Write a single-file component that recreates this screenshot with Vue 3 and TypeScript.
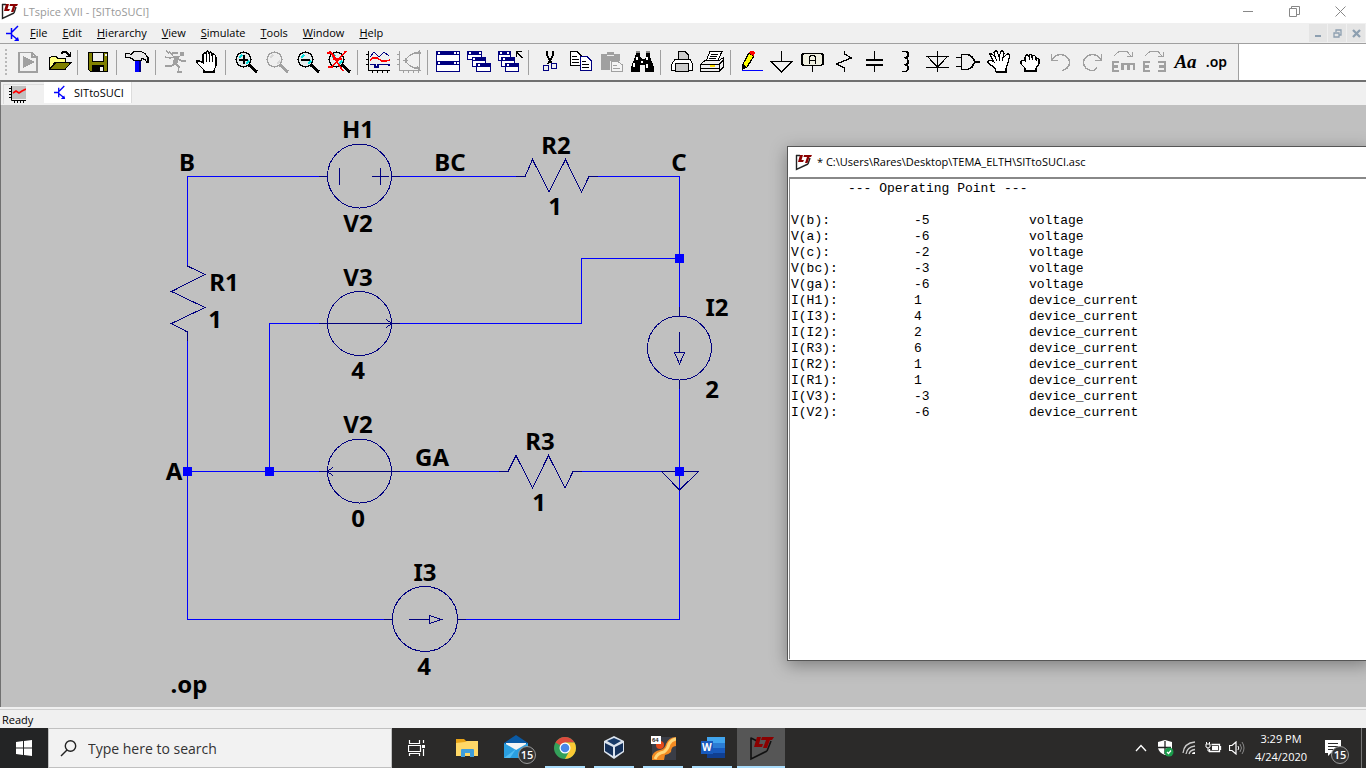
<script setup lang="ts">
interface Tool {
  name: string
  art?: string
  text?: string
  kind?: string
  off?: boolean
}

const G = '#a0a0a0'

const lens = (ring: string, glass: string, shine: string, mark: string) =>
  `<path d="M15 15L23 22" stroke="${ring}" stroke-width="3"/>
   <circle cx="9.500" cy="9.500" r="7.300" fill="${glass}" stroke="${ring}" stroke-width="1.500"/>
   <path d="M5 8L8 5M12 14L15 11" stroke="${shine}" stroke-width="2"/>${mark}`

const handPath =
  'M9 22V20L6 17L2 13V11H5L8 13V4L9 3H10L11 4V2L12 1H13L14 2V3L15 2H16L17 3V5L18 4H19L20 5L21 7V16L19 20V22Z'

const groups: Tool[][] = [
  [
    {
      name: 'Run simulation',
      off: true,
      art: `<path d="M3 2.500H16L21 7V22H3ZM16 3V7H21" fill="none" stroke="${G}" stroke-width="1.500"/><path d="M7 6L19 12L7 18Z" fill="${G}"/>`,
    },
    {
      name: 'Open',
      art: `<path d="M2.500 19V8L4.500 6.500H9L11 8.500H18V12.500H8L2.500 19Z" fill="#ffff80" stroke="#000"/><path d="M3 19.500L9 12.500H24L18 19.500Z" fill="#808000" stroke="#000"/><path d="M14 4L16 2H19L23 6M23.500 2V6.500H19" fill="none" stroke="#000" stroke-width="1.500"/>`,
    },
  ],
  [
    {
      name: 'Save',
      art: `<path d="M2.500 2.500H21.500V21.500H4.500L2.500 19.500Z" fill="#808000" stroke="#000"/><rect x="6.500" y="2.500" width="11" height="9" fill="#efefef" stroke="#000"/><rect x="6" y="15" width="12" height="6" fill="#000"/><rect x="14" y="17" width="3" height="4" fill="#efefef"/><rect x="19" y="4" width="2" height="2" fill="#efefef"/>`,
    },
  ],
  [
    {
      name: 'Control panel',
      art: `<path d="M10 11H16V22H10Z" fill="#00f"/><path d="M14 11H16V22H14Z" fill="#000080"/><path d="M.500 3.500H4L6 4.500L9 1.500H16L20 3.500L23 7.500V12.500H22L20 9.500L17 8.500L16 10.500H9L7 8.500L4 7.500H.500Z" fill="#e8e8e8" stroke="#000" stroke-width="1.200"/>`,
    },
  ],
  [
    {
      name: 'Run',
      off: true,
      art: `<circle cx="18" cy="4" r="2.500" fill="${G}"/><path d="M1 7L6 8L10 7L14 9L18 11H22M13 8L11 14L7 16L1 16M12 14L15 17L14 22L18 22M5 2L9 5M2 1L5 3M8 3H14" fill="none" stroke="${G}" stroke-width="1.500"/><path d="M10 6L16 6L13 14L9 14Z" fill="${G}"/>`,
    },
    {
      name: 'Halt',
      art: `<path d="${handPath}" fill="#fff" stroke="#000" stroke-width="1.300"/><path d="M11.500 4V12M14.500 3V12M17.500 5V12" stroke="#000"/>`,
    },
  ],
  [
    { name: 'Zoom area', art: lens('#000', '#e4ecec', '#00e0e0', '<path d="M5 9.500H14M9.500 5V14" stroke="#000" stroke-width="2"/>') },
    { name: 'Pan', off: true, art: lens(G, '#efefef', '#d8d8d8', '') },
    { name: 'Zoom back', art: lens('#000', '#e4ecec', '#00e0e0', '<path d="M5 9.500H14" stroke="#000" stroke-width="2"/>') },
    {
      name: 'Zoom full extents',
      art: lens('#000', '#e4ecec', '#00e0e0', '<path d="M0 3H4L16 21M1 17H5L19 1M6 9L15 9M3 1L10 10" fill="none" stroke="#f00" stroke-width="1.600"/>'),
    },
  ],
  [
    {
      name: 'Autorange',
      art: `<path d="M2.500 1V20.500H24M0 4.500H2M0 9.500H2M0 14.500H2M6.500 20V23M11.500 20V23M16.500 20V23M21.500 20V23" fill="none" stroke="#000"/><path d="M4 7L8 2L13 7L18 2L23 6" fill="none" stroke="#000080"/><path d="M4 10L7 8L11 8L16 11H20L24 10" fill="none" stroke="#f00" stroke-width="1.500"/><path d="M4 14.500H9V17H12V14.500H23V16" fill="none" stroke="#000080" stroke-width="1.500"/>`,
    },
    {
      name: 'FFT',
      off: true,
      art: `<path d="M2.500 1V20.500H24M0 4.500H2M0 9.500H2M0 14.500H2M6.500 20V23M11.500 20V23M16.500 20V23M21.500 20V23M22.500 1V20M20 4L22.500 1L24 4M20 16L22.500 20M22 3H17L12 6L9 9V12L12 15L17 18H22M6 10.500H11M9 8V13" fill="none" stroke="${G}" stroke-width="1.200"/>`,
    },
  ],
  [
    {
      name: 'Tile windows',
      art: `<path d="M.500 1.500H23.500V21.500H.500Z" fill="#fff" stroke="#000080"/><path d="M0 1H24V5H0ZM0 11H24V15H0Z" fill="#000080"/><path d="M2 2H4V4H2ZM18 2H20V4H18ZM21 2H23V4H21ZM2 12H4V14H2ZM18 12H20V14H18ZM21 12H23V14H21Z" fill="#fff"/>`,
    },
    {
      name: 'Cascade windows',
      art: `<g fill="#fff" stroke="#000080"><path d="M.500 1.500H14.500V9.500H.500Z"/><path d="M5.500 7.500H18.500V16.500H5.500Z"/><path d="M9.500 13.500H23.500V21.500H9.500Z"/></g><path d="M0 1H15V5H0ZM5 7H19V11H5ZM9 13H24V17H9Z" fill="#000080"/><path d="M2 2H4V4H2ZM12 2H14V4H12ZM6 8H8V10H6ZM11 14H13V16H11Z" fill="#fff"/>`,
    },
    {
      name: 'Close all',
      art: `<g fill="#fff" stroke="#000080"><path d="M.500 1.500H12.500V10.500H.500Z"/><path d="M3.500 7.500H16.500V16.500H3.500Z"/><path d="M7.500 13.500H20.500V21.500H7.500Z"/></g><path d="M0 1H13V5H0ZM3 7H17V11H3ZM7 13H21V17H7Z" fill="#000080"/><path d="M2 2H4V4H2ZM9 2H11V4H9ZM5 8H7V10H5ZM9 14H11V16H9Z" fill="#fff"/><path d="M18.500 7V1.500H24M19 2L24 8" fill="none" stroke="#000" stroke-width="1.500"/>`,
    },
  ],
  [
    {
      name: 'Cut',
      art: `<path d="M10 1V5L15 14M16 1V5L11 14" fill="none" stroke="#000" stroke-width="1.800"/><circle cx="9" cy="18" r="2.800" fill="none" stroke="#000080" stroke-width="1.500"/><circle cx="17" cy="16" r="2.800" fill="none" stroke="#000080" stroke-width="1.500"/>`,
    },
    {
      name: 'Copy',
      art: `<path d="M2.500 1.500H9L13.500 6V15.500H2.500Z" fill="#fff" stroke="#000"/><path d="M4 6.500H9M4 9.500H11M4 12.500H11" stroke="#000"/><path d="M12.500 6.500H19L23.500 11V20.500H12.500Z" fill="#fff" stroke="#000080" stroke-width="1.300"/><path d="M14 11.500H18M14 14.500H21M14 17.500H21" stroke="#000"/>`,
    },
    {
      name: 'Paste',
      off: true,
      art: `<path d="M2 4H8V2H15V4H21V11H11V20H2Z" fill="${G}"/><path d="M8 5.500H15" stroke="#eee"/><path d="M12.500 11.500H19L23.500 15V21.500H12.500Z" fill="#f4f4f4" stroke="${G}"/><path d="M14 15.500H18M14 18.500H21" stroke="${G}"/>`,
    },
    {
      name: 'Find',
      art: `<path d="M6 3H10V7L12 9H14L16 7V3H20V7L24 17V22H15V15H10V22H1V17L5 7Z" fill="#000"/><path d="M6 1H10V3H6ZM16 1H20V3H16Z" fill="#888"/><path d="M7 7V10M4 13V17M17 7V10M17 14V18M12 11V13" stroke="#fff" stroke-width="1.500"/>`,
    },
  ],
  [
    {
      name: 'Print',
      art: `<path d="M9.500 9.500V1.500H16L19.500 5V9.500" fill="#ccc" stroke="#000"/><path d="M2.500 14.500L6 9.500H21L23.500 13.500V20.500H2.500Z" fill="#fff" stroke="#000"/><path d="M6.500 13.500H19.500V21.500H6.500Z" fill="#ccc" stroke="#000"/>`,
    },
    {
      name: 'Print setup',
      art: `<path d="M6.500 10L10 1.500H22L18 10Z" fill="#fff" stroke="#000"/><path d="M11 4.500H18M10 6.500H17M9 8.500H16" stroke="#000"/><path d="M.500 14.500L5 10.500H19L23.500 7.500V17L19 21.500H.500Z" fill="#efefef" stroke="#000"/><path d="M.500 14.500H19L23.500 10M19 14V21M1 18.500H19" fill="none" stroke="#000"/><path d="M10 16H15" stroke="#ffe000" stroke-width="2"/>`,
    },
  ],
  [
    {
      name: 'Wire',
      art: `<path d="M4 14L10 3L15 6L8 17L4 19Z" fill="#ff0" stroke="#000" stroke-width="1.200"/><path d="M10 3L11 1H14L16 3L15 6Z" fill="#f00"/><path d="M4 14L8 17L3 20Z" fill="#000"/><path d="M3 20.500H24" stroke="#00f"/>`,
    },
    { name: 'Ground', art: `<path d="M11.500 1V11M0 11.500H23M1 12L11.500 22L22 12" fill="none" stroke="#000" stroke-width="1.400"/>` },
    {
      name: 'Label net',
      art: `<path d="M3 3.500H20L22 5V14L20 15.500H3L1 14V5Z" fill="#efefe0" stroke="#000" stroke-width="1.800"/><path d="M11.500 16V22" stroke="#000"/><path d="M8.500 14V7L10 5.500H13L14.500 7V14M9 10.500H14" fill="none" stroke="#000" stroke-width="1.800"/>`,
    },
    { name: 'Resistor', art: `<path d="M12.500 1V4L19.500 8L4.500 14L12.500 18V22" fill="none" stroke="#000" stroke-width="1.300"/>` },
    { name: 'Capacitor', art: `<path d="M11.500 1V9M11.500 15V22" stroke="#000"/><path d="M3 10H20M3 15H20" stroke="#000" stroke-width="2"/>` },
    {
      name: 'Inductor',
      art: `<path d="M8 1.500H12C15 2 15 7 12 7.500H10C15 7.500 15 14 12 14.500H10C15 14.500 15 20 12 21.500H8" fill="none" stroke="#000" stroke-width="1.600"/>`,
    },
    { name: 'Diode', art: `<path d="M12.500 1V22M1 6.500H24M1 17.500H24M3 7L12.500 17L22 7" fill="none" stroke="#000" stroke-width="1.200"/>` },
    { name: 'Component', art: `<path d="M5.500 4.500H12L16 7L19 11.500L16 17L12 19.500H5.500ZM0 7.500H5M0 16.500H5M19 12H24" fill="none" stroke="#000" stroke-width="1.600"/>` },
    {
      name: 'Move',
      art: `<path d="M9 22L8 18L1 13V11L3 10L7 12L3 5V4H5L8 7L7 2L8 1H10L12 7L14 1H16L17 3L16 8L20 4H22L23 5L21 13L19 18V22Z" fill="#fff" stroke="#000" stroke-width="1.200"/><path d="M8 7L10 11M12 7V11M16 8L15 11" stroke="#000"/>`,
    },
    {
      name: 'Drag',
      art: `<path d="M7 21V18L3 14V11L5 10L7 11V7L8 5H10L11 7V5L13 4L14 5V7L16 5L18 7V9L20 8L21 9V14L18 18V21Z" fill="#fff" stroke="#000" stroke-width="1.200"/><path d="M11 7V10M14.500 7V10M18 9V11" stroke="#000"/>`,
    },
    { name: 'Undo', off: true, art: `<path d="M2.500 4V10.500H9M3 10A9 8 0 1 1 13 20.500" fill="none" stroke="${G}" stroke-width="1.500"/>` },
    { name: 'Redo', off: true, art: `<path d="M21.500 4V10.500H15M21 10A9 8 0 1 0 11 20.500H14L17 18" fill="none" stroke="${G}" stroke-width="1.500"/>` },
    {
      name: 'Rotate',
      off: true,
      art: `<path d="M8 12H2V21H8M2 16.500H7M11 14H24M11.500 13V20M17.500 13V20M23 13V20" fill="none" stroke="${G}" stroke-width="2.400"/><path d="M3 6L8 1.500H16L20 6M21 2V6.500H16" fill="none" stroke="${G}"/>`,
    },
    {
      name: 'Mirror',
      off: true,
      art: `<path d="M8 12H2V21H8M2 16.500H7M16 12H23V21H16M17 16.500H23" fill="none" stroke="${G}" stroke-width="2.400"/><path d="M3 6L8 1.500H16L20 6M21 2V6.500H16" fill="none" stroke="${G}"/>`,
    },
    { name: 'Text', text: 'Aa', kind: 'script' },
    { name: 'SPICE directive', text: '.op', kind: 'directive' },
  ],
]

const menus = ['File', 'Edit', 'Hierarchy', 'View', 'Simulate', 'Tools', 'Window', 'Help']

const results: [string, string, string][] = [
  ['V(b):', '-5', 'voltage'],
  ['V(a):', '-6', 'voltage'],
  ['V(c):', '-2', 'voltage'],
  ['V(bc):', '-3', 'voltage'],
  ['V(ga):', '-6', 'voltage'],
  ['I(H1):', '1', 'device_current'],
  ['I(I3):', '4', 'device_current'],
  ['I(I2):', '2', 'device_current'],
  ['I(R3):', '6', 'device_current'],
  ['I(R2):', '1', 'device_current'],
  ['I(R1):', '1', 'device_current'],
  ['I(V3):', '-3', 'device_current'],
  ['I(V2):', '-6', 'device_current'],
]

const labels: { x: number; y: number; t: string }[] = [
  { x: 187, y: 66, t: 'B' },
  { x: 358, y: 33, t: 'H1' },
  { x: 358, y: 127, t: 'V2' },
  { x: 450, y: 66, t: 'BC' },
  { x: 556, y: 49, t: 'R2' },
  { x: 555, y: 110, t: '1' },
  { x: 679, y: 66, t: 'C' },
  { x: 224, y: 186, t: 'R1' },
  { x: 215, y: 223, t: '1' },
  { x: 358, y: 181, t: 'V3' },
  { x: 358, y: 274, t: '4' },
  { x: 717, y: 211, t: 'I2' },
  { x: 712, y: 293, t: '2' },
  { x: 358, y: 328, t: 'V2' },
  { x: 358, y: 422, t: '0' },
  { x: 432, y: 361, t: 'GA' },
  { x: 540, y: 345, t: 'R3' },
  { x: 539, y: 406, t: '1' },
  { x: 174, y: 375, t: 'A' },
  { x: 425, y: 476, t: 'I3' },
  { x: 424, y: 570, t: '4' },
  { x: 189, y: 588, t: '.op' },
]
</script>

<template>
  <div class="desktop">
    <header class="titlebar">
      <svg class="logo" width="17" height="17" viewBox="0 0 17 17">
        <path d="M1.500 1V15.500L13 10M1 1.500H5M13 10L15 4" fill="none" stroke="#222" stroke-width="1.400" />
        <path d="M5 1H8L6.500 6H9L8 8H3ZM9 1H17L16 3H14.500L12.500 9H10L12 3H8.500Z" fill="#8b0000" />
      </svg>
      <span class="title">LTspice XVII - [SITtoSUCI]</span>
      <div class="caption-buttons">
        <button aria-label="Minimize"><svg width="11" height="11"><path d="M0 5.500H10" stroke="#888" /></svg></button>
        <button aria-label="Restore">
          <svg width="11" height="11"><path d="M.500 2.500H7.500V10.500H.500ZM2.500 2V.500H10.500V8.500H8" fill="none" stroke="#888" /></svg>
        </button>
        <button aria-label="Close"><svg width="11" height="11"><path d="M.500 .500L10.500 10.500M10.500 .500L.500 10.500" stroke="#888" /></svg></button>
      </div>
    </header>

    <nav class="menubar">
      <svg class="transistor" width="14" height="17" viewBox="0 0 14 17">
        <path d="M0 8.500H5M5.500 3V14M6 7L12 1M6 10L12 15" fill="none" stroke="#00f" stroke-width="1.500" />
        <path d="M13 16H8L12 12Z" fill="#00f" />
      </svg>
      <button v-for="m in menus" :key="m" class="menu"><u>{{ m[0] }}</u>{{ m.slice(1) }}</button>
      <div class="mdi">
        <button aria-label="Minimize document"><svg width="9" height="9"><path d="M1 7H7" stroke="#8d9fb0" stroke-width="2" /></svg></button>
        <button aria-label="Restore document">
          <svg width="9" height="9"><path d="M1 4H6V8H1ZM3 3V1H8V6H6" fill="none" stroke="#8d9fb0" stroke-width="1.300" /></svg>
        </button>
        <button aria-label="Close document"><svg width="9" height="9"><path d="M1 1L8 8M8 1L1 8" stroke="#8d9fb0" stroke-width="2.300" /></svg></button>
      </div>
    </nav>

    <div class="toolrow">
      <div class="toolbar">
        <span class="grip"></span>
        <div v-for="(g, i) in groups" :key="i" class="group">
          <button v-for="t in g" :key="t.name" class="tool" :class="t.kind" :disabled="t.off" :aria-label="t.name">
            <svg v-if="t.art" width="25" height="24" viewBox="0 0 25 24" v-html="t.art"></svg>
            <span v-else>{{ t.text }}</span>
          </button>
        </div>
      </div>
    </div>

    <div class="tabs">
      <button class="tab plot" aria-label="Waveform">
        <svg width="17" height="17" viewBox="0 0 17 17">
          <path d="M3 0H17V13H3Z" fill="#c0c0c0" />
          <path d="M2.500 0V14.500H17M0 2.500H2M0 5.500H2M0 8.500H2M0 11.500H2M5.500 14V17M8.500 14V17M11.500 14V17M14.500 14V17" fill="none" stroke="#000" />
          <path d="M4 7L7 5L10 7L13 5L17 3" fill="none" stroke="#f00" stroke-width="1.600" />
        </svg>
      </button>
      <button class="tab active">
        <svg width="12" height="15" viewBox="0 0 14 17">
          <path d="M0 8.500H5M5.500 3V14M6 7L12 1M6 10L12 15" fill="none" stroke="#00f" stroke-width="1.500" />
          <path d="M13 16H8L12 12Z" fill="#00f" />
        </svg>
        SITtoSUCI
      </button>
    </div>

    <main class="sheet">
      <svg class="schematic" width="760" height="602" viewBox="0 0 760 602">
        <g class="wire">
          <path d="M187.500 161V71.500H320M400 71.500H517M597 71.500H679.500V203" />
          <path d="M187.500 235V514.500H385M465 514.500H679.500V283" />
          <path d="M187.500 366.500H320M400 366.500H500M581 366.500H679.500" />
          <path d="M269.500 366V218.500H320M400 218.500H581.500V153.500H679.500" />
        </g>
        <g class="part">
          <circle cx="359.500" cy="71" r="32" />
          <path d="M319 71.500H327M392 71.500H400M339.500 63V80M380.500 63V80M372 71.500H389" />
          <circle cx="359.500" cy="218.500" r="32" />
          <path d="M319 218.500H400M386 214.500L392 218.500L386 222.500" />
          <circle cx="359.500" cy="366" r="32" />
          <path d="M319 366.500H400M333 362.500L327 366.500L333 370.500" />
          <circle cx="679.500" cy="243" r="32" />
          <path d="M679.500 202V211M679.500 275V284M679.500 227V247M674.500 247.500H684.500L679.500 259Z" />
          <circle cx="425" cy="514" r="32.500" />
          <path d="M384 514.500H393M457 514.500H466M409 514.500H429M429.500 510.500V518.500L441 514.500Z" />
          <path d="M516 71.500H525L532.500 54.500L549 87L565.500 54.500L581.500 87L589 71.500H598" />
          <path d="M499 366.500H508L516 350.500L532.500 383L548.500 350.500L565 383L573 366.500H582" />
          <path d="M187.500 160V161L205 169.500L171.500 186.500L205 202.500L171.500 218.500L187.500 227V236" />
          <path d="M661.500 366.500H698.500L679.500 385Z" />
        </g>
        <path class="node" d="M675 149H684V158H675ZM675 362H684V371H675ZM265 362H274V371H265ZM183 362H192V371H183Z" />
        <text v-for="(l, i) in labels" :key="i" :x="l.x" :y="l.y">{{ l.t }}</text>
      </svg>

      <section class="result">
        <header>
          <svg class="logo" width="17" height="17" viewBox="0 0 17 17">
            <path d="M1.500 1V15.500L13 10M1 1.500H5M13 10L15 4" fill="none" stroke="#222" stroke-width="1.400" />
            <path d="M5 1H8L6.500 6H9L8 8H3ZM9 1H17L16 3H14.500L12.500 9H10L12 3H8.500Z" fill="#8b0000" />
          </svg>
          <span>* C:\Users\Rares\Desktop\TEMA_ELTH\SITtoSUCI.asc</span>
        </header>
        <div class="listing">
          <table>
            <caption>--- Operating Point ---</caption>
            <tbody>
              <tr v-for="r in results" :key="r[0]">
                <th scope="row">{{ r[0] }}</th>
                <td class="value">{{ r[1] }}</td>
                <td>{{ r[2] }}</td>
              </tr>
            </tbody>
          </table>
        </div>
      </section>
    </main>

    <footer class="status">Ready</footer>

    <div class="taskbar">
      <button class="start" aria-label="Start">
        <svg width="16" height="16"><path d="M0 2L7 1V7.500H0ZM8 1L16 0V7.500H8ZM0 8.500H7V15L0 14ZM8 8.500H16V16L8 15Z" fill="#fff" /></svg>
      </button>
      <label class="search">
        <svg width="17" height="17"><circle cx="10.500" cy="6" r="5.200" fill="none" stroke="#222" stroke-width="1.400" /><path d="M7 10L1 16" stroke="#222" stroke-width="1.400" /></svg>
        <input type="text" placeholder="Type here to search" aria-label="Search" />
      </label>
      <div class="apps">
        <button class="app view" aria-label="Task view">
          <svg width="17" height="17"><path d="M1.500 0V3.500H11.500V0M1.500 16V13.500H11.500V16M.500 5.500H12.500V11.500H.500ZM15.500 0V3M15.500 9V16" fill="none" stroke="#fff" stroke-width="1.200" /><path d="M14 5H17V8H14Z" fill="#fff" /></svg>
        </button>
        <button class="app" aria-label="File Explorer">
          <svg width="24" height="24"><path d="M1 3H9L11 5H22V20H1Z" fill="#e8a317" /><path d="M1 7L10 6L12 5H23V20H1Z" fill="#ffd867" /><path d="M6 21V14Q6 13 7 13H18Q19 13 19 14V21H15V17H10V21Z" fill="#3f9edb" /></svg>
        </button>
        <button class="app" aria-label="Mail">
          <svg width="36" height="30"><path d="M6 10L18 2L30 10V15H6Z" fill="#0a5aa5" /><path d="M8 10H28V16L18 18L8 16Z" fill="#f4f4f4" /><path d="M6 10L18 17L30 10V25H6Z" fill="#2a9fe0" /><path d="M6 25L18 16L12 25Z" fill="#50bcf2" /></svg>
          <span class="badge">15</span>
        </button>
        <button class="app open" aria-label="Chrome">
          <svg width="24" height="24" viewBox="0 0 24 24"><circle cx="12" cy="12" r="11" fill="#34a05a" /><path d="M12 12L2.500 6.500A11 11 0 0 1 21.500 6.500H12Z" fill="#dd4b3e" /><path d="M12 23A11 11 0 0 0 21.500 6.500H12L16.500 14.500Z" fill="#fcc934" /><circle cx="12" cy="12" r="5.500" fill="#fff" /><circle cx="12" cy="12" r="4.300" fill="#4a86e8" /></svg>
        </button>
        <button class="app open" aria-label="VirtualBox">
          <svg width="24" height="26" viewBox="0 0 24 26"><path d="M2 6L12 1L22 6V17L12 24L2 17Z" fill="#dbe3ee" /><path d="M5 6L12 3L19 6L12 10Z" fill="#173a68" /><path d="M3 8L11 12V21L3 16ZM21 8L13 12V21L21 16Z" fill="#15315a" /></svg>
        </button>
        <button class="app open" aria-label="Editor">
          <svg width="25" height="24" viewBox="0 0 25 24"><path d="M1 1H25V24H1Z" fill="#3a3d46" /><path d="M1 24V20Q3 15 9 14Q14 13 15 8Q18 1 25 1V10Q20 10 20 16Q17 19 14 19L13 24Z" fill="#f28a22" /><path d="M4 23Q6 17 13 16Q17 13 18 8Q20 4 25 3" fill="none" stroke="#ffd77a" stroke-width="3" /><circle cx="9" cy="9" r="4" fill="#e24a1a" /><rect width="10" height="8" fill="#fff" /><text x="1" y="6" font-family="Liberation Sans" font-size="6" font-weight="700" fill="#222">64</text></svg>
        </button>
        <button class="app open" aria-label="Word">
          <svg width="25" height="24" viewBox="0 0 25 24"><path d="M7 1H25V7H7Z" fill="#41a5ee" /><path d="M7 7H25V12H7Z" fill="#2b7cd3" /><path d="M7 12H25V17H7Z" fill="#185abd" /><path d="M7 17H25V22H7Z" fill="#103f91" /><rect x="1" y="5" width="12" height="13" fill="#185abd" /><text x="2" y="15" font-family="Open Sans" font-size="10" font-weight="700" fill="#fff">W</text></svg>
        </button>
        <button class="app open current" aria-label="LTspice">
          <svg width="25" height="25" viewBox="0 0 25 25"><path d="M2 1.500V23L18 15M2 2L8 5M18 15L22 5" fill="none" stroke="#111" stroke-width="1.600" /><path d="M8 1H12L10 8H14L13 11H5ZM13 1H25L23 4H21L18 12H14L17 4H12Z" fill="#8b0000" /></svg>
        </button>
      </div>
      <div class="tray">
        <button aria-label="Show hidden icons"><svg width="12" height="8"><path d="M1 7L6 1.500L11 7" fill="none" stroke="#fff" stroke-width="1.300" /></svg></button>
        <button aria-label="Security">
          <svg width="17" height="17"><path d="M8 0L15 2V8Q14 13 8 15Q2 13 1 8V2Z" fill="#fff" /><path d="M8 1V14M1 7.500H14" stroke="#222" stroke-width="1.300" /><circle cx="12" cy="12" r="4.500" fill="#1a9c4b" /><path d="M10 12L11.500 13.500L14 10.500" fill="none" stroke="#fff" stroke-width="1.200" /></svg>
        </button>
        <button aria-label="Network">
          <svg width="14" height="14"><path d="M1 12Q2 2 13 1M4 13Q5 6 13 5M7 13Q8 9 13 8.500" fill="none" stroke="#ccc" stroke-width="1.300" /><path d="M10 13Q10 11 13 11V13Z" fill="#fff" /></svg>
        </button>
        <button aria-label="Battery">
          <svg width="17" height="12"><path d="M6.500 2.500H14.500V9.500H4.500V7M15.500 4V8" fill="none" stroke="#fff" stroke-width="1.300" /><path d="M7 4H13V8H7Z" fill="#fff" /><path d="M1 2H5V5L3 6L1 5ZM1.500 0V2M4.500 0V2M3 6V9H5" fill="none" stroke="#fff" /></svg>
        </button>
        <button aria-label="Volume">
          <svg width="16" height="14"><path d="M.500 4.500H3L7 1V13L3 9.500H.500Z" fill="none" stroke="#fff" stroke-width="1.200" /><path d="M9 5Q10.500 7 9 9" fill="none" stroke="#fff" /><path d="M11 3Q14 7 11 11M13 1Q17 7 13 13" fill="none" stroke="#888" /></svg>
        </button>
        <div class="clock"><span>3:29 PM</span><span>4/24/2020</span></div>
        <button class="notice" aria-label="Notifications">
          <svg width="16" height="17"><path d="M0 0H16V13H6L3 16V13H0Z" fill="#fff" /><path d="M3 3.500H13M3 6.500H13M3 9.500H10" stroke="#2a2a2a" /></svg>
          <span class="badge">15</span>
        </button>
      </div>
    </div>
  </div>
</template>

<style>
body {
  margin: 0;
  overflow: hidden;
}
</style>

<style scoped>
.desktop {
  display: flex;
  flex-direction: column;
  height: 100vh;
  background: #f0f0f0;
  color: #000;
  font: 12px/16px "Open Sans", "Liberation Sans", sans-serif;
}
button {
  display: flex;
  align-items: center;
  justify-content: center;
  margin: 0;
  padding: 0;
  border: 0;
  background: none;
  color: inherit;
  font: inherit;
}
svg {
  display: block;
  flex: none;
}
.titlebar {
  display: flex;
  align-items: center;
  height: 23px;
  padding-left: 1px;
  background: #fff;
}
.title {
  margin-left: 5px;
  color: #999;
  font-size: 11px;
}
.caption-buttons {
  display: flex;
  margin-right: 3px;
  margin-left: auto;
}
.caption-buttons button {
  width: 46px;
  height: 20px;
}
.menubar {
  display: flex;
  align-items: center;
  height: 20px;
  padding-left: 6px;
  border-bottom: 1px solid #a0a0a0;
  font-size: 11px;
}
.transistor {
  margin-right: 2px;
}
.menu {
  padding: 0 7px 0 8px;
}
.mdi {
  display: flex;
  gap: 1px;
  margin-right: 1px;
  margin-left: auto;
}
.mdi button {
  width: 18px;
  height: 18px;
  background: #e5e5e5;
}
.toolrow {
  display: flex;
  flex: none;
  height: 36px;
  background: #fff;
}
.toolbar {
  display: flex;
  padding-right: 6px;
  border-right: 1px solid #a0a0a0;
  background: #f0f0f0;
}
.grip {
  width: 2px;
  margin: 5px 6px 3px 5px;
  background: repeating-linear-gradient(#b8b8b8 0 2px, #f0f0f0 2px 4px);
}
.group {
  display: flex;
}
.group + .group::before {
  content: "";
  width: 1px;
  height: 25px;
  margin: 6px 5px 0 2px;
  background: #a0a0a0;
}
.tool {
  width: 31px;
  height: 36px;
}
.tool svg {
  shape-rendering: crispEdges;
}
.script {
  font: italic bold 19px/24px "Liberation Serif", serif;
}
.directive {
  font: 600 14px/24px "Noto Sans", sans-serif;
}
.tabs {
  display: flex;
  flex: none;
  height: 23px;
  padding-left: 2px;
  border-top: 2px solid #707070;
  border-left: 1px solid #808080;
}
.tab {
  box-sizing: border-box;
  height: 21px;
}
.tab.plot {
  justify-content: flex-start;
  width: 41px;
  height: 20px;
  margin-top: 2px;
  padding-left: 5px;
  border: 1px solid #dcdcdc;
  border-width: 1px 0 0 1px;
}
.tab.active {
  gap: 8px;
  padding: 0 7px 0 10px;
  border-right: 1px solid #dcdcdc;
  background: #fff;
  font-size: 11px;
}
.sheet {
  position: relative;
  flex: 1;
  min-height: 0;
  overflow: hidden;
  border-left: 1px solid #707070;
  background: #c0c0c0;
}
.schematic {
  margin-left: -1px;
}
.wire,
.part {
  fill: none;
  stroke: #00f;
  shape-rendering: crispEdges;
}
.part {
  stroke: #000080;
}
.node {
  fill: #00f;
}
.schematic text {
  fill: #000;
  font: bold 24px "Noto Sans", sans-serif;
  text-anchor: middle;
}
.result {
  position: absolute;
  top: 41px;
  right: -4px;
  left: 786px;
  height: 513px;
  border: 1px solid #555;
  background: #fff;
  box-shadow: 0 4px 16px rgba(0, 0, 0, 0.35);
}
.result header {
  display: flex;
  align-items: center;
  height: 30px;
  padding-left: 7px;
  font-size: 11px;
}
.result header span {
  margin-left: 5px;
}
.listing {
  height: 478px;
  margin-left: 1px;
  padding: 2px 0 0 1px;
  border-top: 2px solid #888;
  border-left: 1px solid #888;
  font: 13px/16px "Liberation Mono", monospace;
}
table {
  border-collapse: collapse;
}
caption {
  padding: 0 0 16px 57px;
  text-align: left;
  white-space: nowrap;
}
th,
td {
  padding: 0;
  font-weight: 400;
  text-align: left;
}
th {
  width: 123px;
}
.value {
  width: 115px;
}
.status {
  flex: none;
  height: 16px;
  margin-top: 2px;
  padding: 2px 0 0 2px;
  border-top: 1px solid #d0d0d0;
  font-size: 11px;
}
.taskbar {
  display: flex;
  flex: none;
  height: 40px;
  background: #2b2a29;
  color: #fff;
}
.start {
  width: 48px;
  background: #232425;
}
.search {
  display: flex;
  align-items: center;
  box-sizing: border-box;
  width: 344px;
  padding-left: 11px;
  border: 1px solid #c0c0c0;
  background: #f2f2f2;
}
.search input {
  flex: 1;
  min-width: 0;
  margin-left: 11px;
  padding: 2px 0 0;
  border: 0;
  outline: 0;
  background: none;
  font: 14px/20px "Open Sans", sans-serif;
}
.search input::placeholder {
  color: #333;
  opacity: 1;
}
.apps {
  display: flex;
  gap: 1px;
}
.app {
  position: relative;
  width: 48px;
}
.view {
  margin-right: 2px;
}
.open::after {
  content: "";
  position: absolute;
  right: 4px;
  bottom: 0;
  left: 4px;
  height: 2px;
  background: #a9dcfb;
}
.current {
  background: #565656;
}
.current::after {
  right: 0;
  left: 0;
}
.badge {
  position: absolute;
  top: 18px;
  left: 26px;
  width: 16px;
  height: 16px;
  border: 1px solid #999;
  border-radius: 50%;
  background: #333;
  font-size: 11px;
  font-weight: 600;
  line-height: 16px;
  text-align: center;
}
.tray {
  display: flex;
  align-items: center;
  margin-left: auto;
  padding-right: 4px;
}
.tray button {
  width: 24px;
  height: 40px;
}
.clock {
  display: flex;
  flex-direction: column;
  width: 64px;
  text-align: center;
  font-size: 11px;
  line-height: 18px;
}
.tray .notice {
  position: relative;
  width: 49px;
  border-right: 1px solid #777;
}
.notice svg {
  margin-right: 8px;
}
.notice .badge {
  left: 18px;
}
</style>
